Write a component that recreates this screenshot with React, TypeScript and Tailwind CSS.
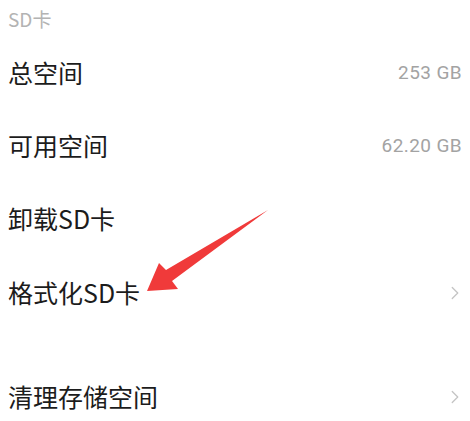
import { ChevronRight } from 'lucide-react'

const font = { fontFamily: '"Noto Sans CJK SC", "Noto Sans", sans-serif' }

function Row({ label, value, arrow, h = 'h-[73px]' }: { label: string; value?: string; arrow?: boolean; h?: string }) {
  return (
    <div className={`flex items-center justify-between pl-[8px] pr-[8px] ${h}`}>
      <span className="text-[25px] leading-none text-[#1c1c1c]">{label}</span>
      {value && <span className="text-[19px] leading-none text-[#a3a3a3] font-['Roboto',sans-serif] tracking-[0.4px]">{value}</span>}
      {arrow && <ChevronRight size={22} strokeWidth={1.4} className="text-[#c4c4c4] -mr-[4px]" />}
    </div>
  )
}

export default function App() {
  return (
    <div className="relative w-[470px] h-[421px] overflow-hidden bg-white" style={font}>
      <div className="h-[36px] pl-[8px] pt-[9px] text-[19px] leading-[20px] text-[#b3b3b3]">SD卡</div>
      <Row label="总空间" value="253 GB" />
      <Row label="可用空间" value="62.20 GB" />
      <Row label="卸载SD卡" />
      <Row label="格式化SD卡" arrow h="h-[75px]" />
      <div className="h-[30px]" />
      <Row label="清理存储空间" arrow />
      {/* red annotation arrow drawn over the list */}
      <svg className="absolute left-0 top-0 pointer-events-none" width="470" height="421">
        <polygon points="147,291 159,263 166,270 268,210 172,281 178,289" fill="#f03a3a" />
      </svg>
    </div>
  )
}
